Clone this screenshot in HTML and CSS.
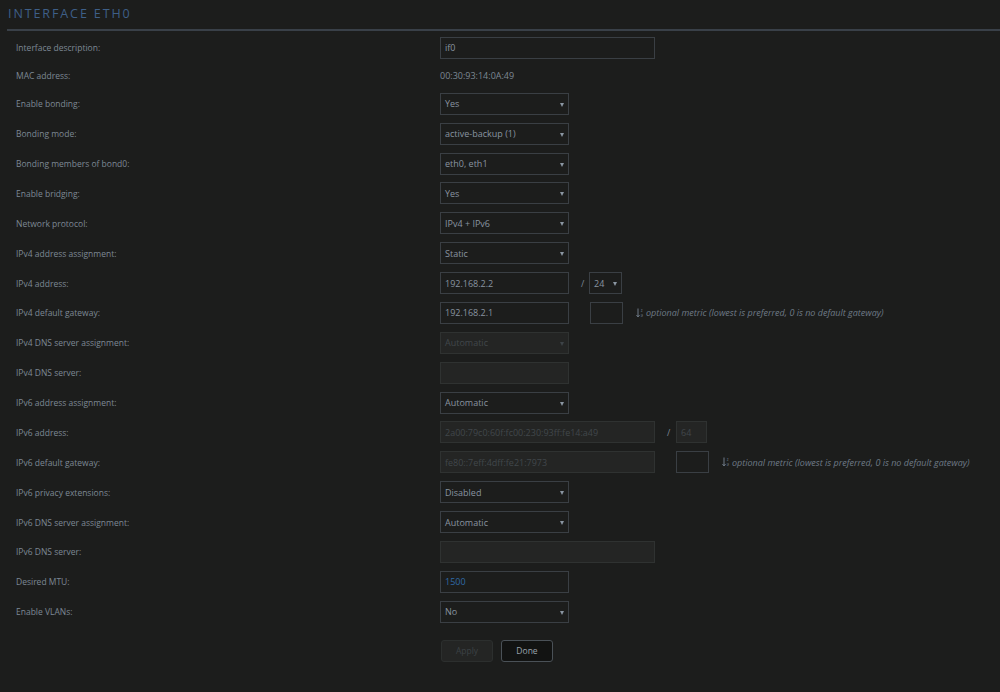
FILE: index.html
```html
<!DOCTYPE html>
<html lang="en">
<head>
    <meta charset="UTF-8">
    <title>Interface eth0</title>
    <link rel="stylesheet" href="styles.css">
</head>
<body>
    <h2 class="title">Interface eth0</h2>

    <div class="form">
        <div class="row">
            <label>Interface description:</label>
            <div class="field"><input class="text wide" type="text" value="if0"></div>
        </div>
        <div class="row short">
            <label>MAC address:</label>
            <div class="field"><span class="value">00:30:93:14:0A:49</span></div>
        </div>
        <div class="row">
            <label>Enable bonding:</label>
            <div class="field"><div class="select">Yes</div></div>
        </div>
        <div class="row">
            <label>Bonding mode:</label>
            <div class="field"><div class="select">active-backup (1)</div></div>
        </div>
        <div class="row">
            <label>Bonding members of bond0:</label>
            <div class="field"><div class="select">eth0, eth1</div></div>
        </div>
        <div class="row">
            <label>Enable bridging:</label>
            <div class="field"><div class="select">Yes</div></div>
        </div>
        <div class="row">
            <label>Network protocol:</label>
            <div class="field"><div class="select">IPv4 + IPv6</div></div>
        </div>
        <div class="row">
            <label>IPv4 address assignment:</label>
            <div class="field"><div class="select">Static</div></div>
        </div>
        <div class="row">
            <label>IPv4 address:</label>
            <div class="field">
                <input class="text" type="text" value="192.168.2.2">
                <span class="slash">/</span>
                <div class="select prefix">24</div>
            </div>
        </div>
        <div class="row">
            <label>IPv4 default gateway:</label>
            <div class="field">
                <input class="text" type="text" value="192.168.2.1">
                <span class="spacer"></span>
                <input class="text metric" type="text" value="">
                <span class="hint">
                    <svg class="sort" width="9" height="10" viewBox="0 0 9 10">
                        <path d="M2 0.5 V8.5 M0.5 7 L2 9 L3.5 7" stroke="#6e7a86" stroke-width="1" fill="none"/>
                        <text x="4.6" y="4" font-size="4.2" fill="#6e7a86" font-family="Liberation Sans, sans-serif">1</text>
                        <text x="4.6" y="9" font-size="4.2" fill="#6e7a86" font-family="Liberation Sans, sans-serif">9</text>
                    </svg>
                    optional metric (lowest is preferred, 0 is no default gateway)
                </span>
            </div>
        </div>
        <div class="row">
            <label>IPv4 DNS server assignment:</label>
            <div class="field"><div class="select disabled">Automatic</div></div>
        </div>
        <div class="row">
            <label>IPv4 DNS server:</label>
            <div class="field"><input class="text disabled" type="text" value="" disabled></div>
        </div>
        <div class="row">
            <label>IPv6 address assignment:</label>
            <div class="field"><div class="select">Automatic</div></div>
        </div>
        <div class="row">
            <label>IPv6 address:</label>
            <div class="field">
                <input class="text wide disabled" type="text" value="2a00:79c0:60f:fc00:230:93ff:fe14:a49" disabled>
                <span class="slash">/</span>
                <input class="text prefix6 disabled" type="text" value="64" disabled>
            </div>
        </div>
        <div class="row">
            <label>IPv6 default gateway:</label>
            <div class="field">
                <input class="text wide disabled" type="text" value="fe80::7eff:4dff:fe21:7973" disabled>
                <span class="spacer"></span>
                <input class="text metric" type="text" value="">
                <span class="hint">
                    <svg class="sort" width="9" height="10" viewBox="0 0 9 10">
                        <path d="M2 0.5 V8.5 M0.5 7 L2 9 L3.5 7" stroke="#6e7a86" stroke-width="1" fill="none"/>
                        <text x="4.6" y="4" font-size="4.2" fill="#6e7a86" font-family="Liberation Sans, sans-serif">1</text>
                        <text x="4.6" y="9" font-size="4.2" fill="#6e7a86" font-family="Liberation Sans, sans-serif">9</text>
                    </svg>
                    optional metric (lowest is preferred, 0 is no default gateway)
                </span>
            </div>
        </div>
        <div class="row">
            <label>IPv6 privacy extensions:</label>
            <div class="field"><div class="select">Disabled</div></div>
        </div>
        <div class="row">
            <label>IPv6 DNS server assignment:</label>
            <div class="field"><div class="select">Automatic</div></div>
        </div>
        <div class="row">
            <label>IPv6 DNS server:</label>
            <div class="field"><input class="text wide disabled" type="text" value="" disabled></div>
        </div>
        <div class="row">
            <label>Desired MTU:</label>
            <div class="field"><input class="text mtu" type="text" value="1500"></div>
        </div>
        <div class="row">
            <label>Enable VLANs:</label>
            <div class="field"><div class="select">No</div></div>
        </div>

        <div class="buttons">
            <button class="btn" disabled>Apply</button>
            <button class="btn done">Done</button>
        </div>
    </div>
</body>
</html>
```

FILE: styles.css
```css
body {
    margin: 0;
    background: #1c1d1c;
    font-family: 'Open Sans', 'Liberation Sans', sans-serif;
    font-size: 8.5px;
    color: #7c8894;
    height: 692px;
    overflow: hidden;
}

.title {
    margin: 0 0 0 7px;
    padding: 7px 0 0 1px;
    height: 29px;
    box-sizing: border-box;
    font-size: 12.5px;
    font-weight: normal;
    letter-spacing: 1.9px;
    text-transform: uppercase;
    color: #3e5f88;
    line-height: 14px;
}

.title + .form {
    border-top: 2px solid #394048;
    margin-left: 7px;
}

.form {
    padding-top: 2px;
}

.row {
    display: grid;
    grid-template-columns: 424px auto;
    align-items: center;
    height: 29.88px;
    padding-left: 9px;
}

.row.short {
    height: 26px;
}

.field {
    display: flex;
    align-items: center;
}

.value {
    color: #7c8894;
    font-size: 9px;
}

.text, .select {
    box-sizing: border-box;
    height: 22px;
    width: 129px;
    background: #1c1d1c;
    border: 1px solid #3a3f44;
    color: #8994a0;
    font-family: inherit;
    font-size: 9px;
    padding: 0 4px;
    margin: 0;
    outline: none;
}

.text.wide {
    width: 215px;
}

.select {
    position: relative;
    display: flex;
    align-items: center;
}

.select::after {
    content: "";
    position: absolute;
    right: 4px;
    top: 9px;
    border-left: 2.5px solid transparent;
    border-right: 2.5px solid transparent;
    border-top: 4px solid #8a96a2;
}

.select.prefix {
    width: 33px;
}

.slash {
    width: 3px;
    margin: 0 5px 0 12px;
    color: #7c8894;
    font-size: 9px;
}

.text.prefix6 {
    width: 31px;
    margin-left: 1px;
}

.spacer {
    width: 21px;
}

.text.metric {
    width: 33px;
}

.hint {
    display: flex;
    align-items: center;
    margin-left: 13px;
    font-size: 9px;
    font-style: italic;
    color: #6e7a86;
}

.sort {
    margin-right: 1px;
}

.disabled {
    background: #242524;
    border-color: #2f3231;
    color: #41474b;
}

.select.disabled::after {
    border-top-color: #3d4347;
}

.text.mtu {
    color: #2f6aa8;
}

.buttons {
    display: flex;
    gap: 8px;
    padding: 13px 0 0 434px;
}

.btn {
    box-sizing: border-box;
    height: 22px;
    width: 52px;
    border-radius: 3px;
    font-family: inherit;
    font-size: 8.5px;
    background: #242524;
    border: 1px solid #2c2f2e;
    color: #3c4245;
}

.btn.done {
    background: #121312;
    border: 1px solid #4a5157;
    color: #9aa4ad;
}
```
